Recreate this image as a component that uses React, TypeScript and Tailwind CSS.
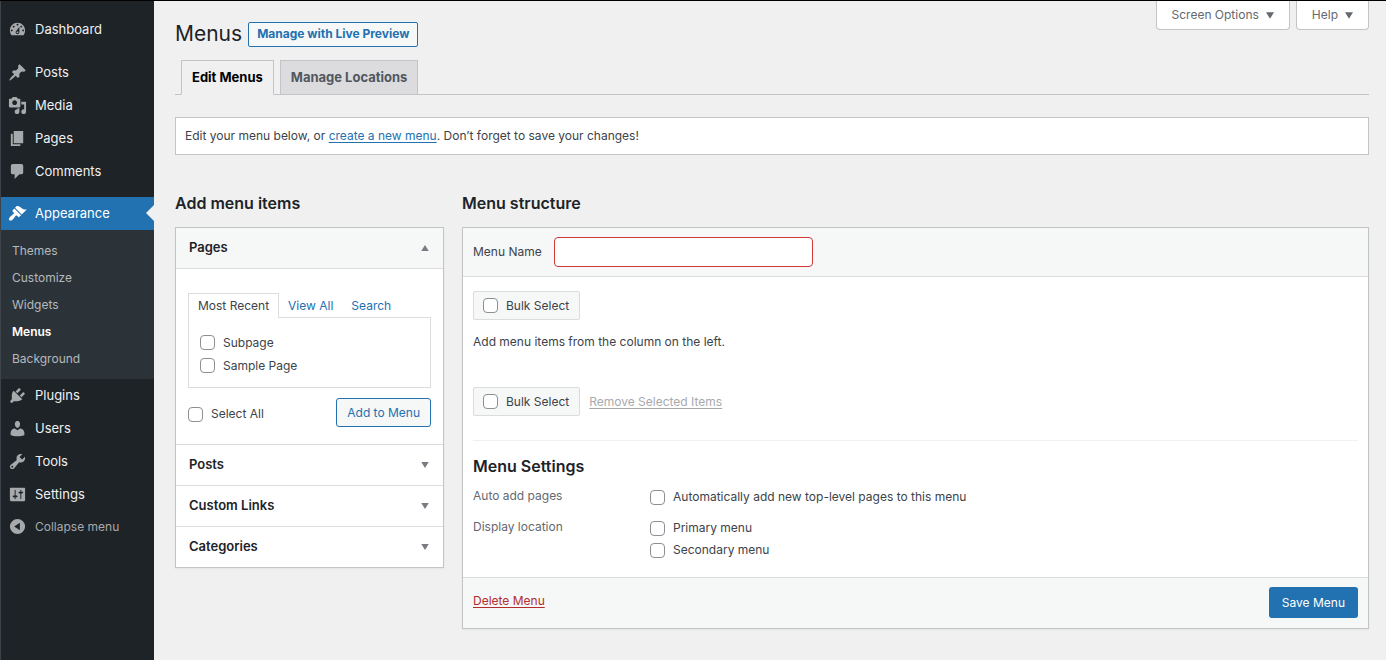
import React, { useState } from 'react';
import clsx from 'clsx';

const icons = {
  dashboard:
    'M3.76 16h12.48c1.1-1.37 1.76-3.11 1.76-5 0-4.42-3.58-8-8-8s-8 3.58-8 8c0 1.89.66 3.63 1.76 5zM10 4c.55 0 1 .45 1 1s-.45 1-1 1-1-.45-1-1 .45-1 1-1zM6 6c.55 0 1 .45 1 1s-.45 1-1 1-1-.45-1-1 .45-1 1-1zm8 0c.55 0 1 .45 1 1s-.45 1-1 1-1-.45-1-1 .45-1 1-1zm-5.37 5.55L12 7v6c0 1.1-.9 2-2 2s-2-.9-2-2c0-.57.24-1.08.63-1.45zM4 10c.55 0 1 .45 1 1s-.45 1-1 1-1-.45-1-1 .45-1 1-1zm12 0c.55 0 1 .45 1 1s-.45 1-1 1-1-.45-1-1 .45-1 1-1zm-5 3c0-.55-.45-1-1-1s-1 .45-1 1 .45 1 1 1 1-.45 1-1z',
  posts:
    'M10.44 3.02l1.82-1.82 6.36 6.35-1.83 1.82c-1.05-.68-2.48-.57-3.41.36l-.75.75c-.92.93-1.04 2.35-.35 3.41l-1.83 1.82-2.41-2.41-2.8 2.79c-.42.42-3.38 2.71-3.8 2.29s1.86-3.39 2.28-3.81l2.79-2.79L4.1 9.36l1.83-1.82c1.05.69 2.48.57 3.4-.36l.75-.75c.93-.92 1.05-2.35.36-3.41z',
  media:
    'M13 11V4c0-.55-.45-1-1-1h-1.67L9 1H5L3.67 3H2c-.55 0-1 .45-1 1v7c0 .55.45 1 1 1h10c.55 0 1-.45 1-1zM7 4.5c1.38 0 2.5 1.12 2.5 2.5S8.38 9.5 7 9.5 4.5 8.38 4.5 7 5.62 4.5 7 4.5zM14 6h5v10.5c0 1.38-1.12 2.5-2.5 2.5S14 17.88 14 16.5s1.12-2.5 2.5-2.5c.17 0 .34.02.5.05V9h-3V6zm-4 8.05V13h2v3.5c0 1.38-1.12 2.5-2.5 2.5S7 17.88 7 16.5 8.12 14 9.5 14c.17 0 .34.02.5.05z',
  pages: 'M6 15V2h10v13H6zm-1 1h8v2H3V5h2v11z',
  comments:
    'M5 2h9c1.1 0 2 .9 2 2v7c0 1.1-.9 2-2 2h-2l-5 5v-5H5c-1.1 0-2-.9-2-2V4c0-1.1.9-2 2-2z',
  appearance:
    'M14.48 11.06L7.41 3.99l1.5-1.5c.5-.56 2.3-.47 3.51.32 1.21.8 1.43 1.28 2.91 2.1 1.18.64 2.45 1.26 4.45.85zm-.71.71L6.7 4.7 4.93 6.47c-.39.39-.39 1.02 0 1.41l1.06 1.06c.39.39.39 1.03 0 1.42-.6.6-1.43 1.11-2.21 1.69-.35.26-.7.53-1.01.84C1.43 14.23.4 16.08 1.4 17.07c.99 1 2.84-.03 4.18-1.36.31-.31.58-.66.85-1.02.57-.78 1.08-1.61 1.69-2.21.39-.39 1.02-.39 1.41 0l1.06 1.06c.39.39 1.02.39 1.41 0z',
  plugins:
    'M13.11 4.36L9.87 7.6 8 5.73l3.24-3.24c.35-.34 1.05-.2 1.56.32.52.51.66 1.21.31 1.55zm-8 1.77l.91-1.12 9.01 9.01-1.19.84c-.71.71-2.63 1.16-3.82 1.16H6.14L4.9 17.26c-.59.59-1.54.59-2.12 0-.59-.58-.59-1.53 0-2.12l1.24-1.24v-3.88c0-1.13.4-3.19 1.09-3.89zm7.26 3.97l3.24-3.24c.34-.35 1.04-.21 1.55.31.52.51.66 1.21.31 1.55l-3.24 3.25z',
  users:
    'M10 9.25c-2.27 0-2.73-3.44-2.73-3.44C7 4.02 7.82 2 9.97 2c2.16 0 2.98 2.02 2.71 3.81 0 0-.41 3.44-2.68 3.44zm0 2.57L12.72 10c2.39 0 4.52 2.33 4.52 4.53v2.49s-3.65 1.13-7.24 1.13c-3.65 0-7.24-1.13-7.24-1.13v-2.49c0-2.25 1.94-4.48 4.47-4.48z',
  tools:
    'M16.68 9.77c-1.34 1.34-3.3 1.67-4.95.99l-5.41 6.52c-.99.99-2.59.99-3.58 0s-.99-2.59 0-3.57l6.52-5.42c-.68-1.65-.35-3.61.99-4.95 1.28-1.28 3.12-1.62 4.72-1.06l-2.89 2.89 2.82 2.82 2.86-2.87c.53 1.58.18 3.39-1.08 4.65zM3.81 16.21c.4.39 1.04.39 1.43 0 .4-.4.4-1.04 0-1.43-.39-.4-1.03-.4-1.43 0-.39.39-.39 1.03 0 1.43z',
  settings:
    'M18 16V4c0-.55-.45-1-1-1H3c-.55 0-1 .45-1 1v12c0 .55.45 1 1 1h14c.55 0 1-.45 1-1zM8 11h1c.55 0 1 .45 1 1s-.45 1-1 1H8v1.5c0 .28-.22.5-.5.5s-.5-.22-.5-.5V13H6c-.55 0-1-.45-1-1s.45-1 1-1h1V5.5c0-.28.22-.5.5-.5s.5.22.5.5V11zm5-2h-1c-.55 0-1-.45-1-1s.45-1 1-1h1V5.5c0-.28.22-.5.5-.5s.5.22.5.5V7h1c.55 0 1 .45 1 1s-.45 1-1 1h-1v5.5c0 .28-.22.5-.5.5s-.5-.22-.5-.5V9z',
  collapse: 'M10 2a8 8 0 1 0 0 16 8 8 0 0 0 0-16zM12.5 14L6.5 10l6-4v8z',
};

type IconName = keyof typeof icons;

function Icon({ name }: { name: IconName }) {
  return (
    <svg viewBox="0 0 20 20" className="w-[19px] h-[19px] shrink-0" fill="currentColor" fillRule="evenodd" aria-hidden="true">
      <path d={icons[name]} />
    </svg>
  );
}

function Triangle({ up = false, className }: { up?: boolean; className: string }) {
  return (
    <svg viewBox="0 0 10 8" className={className} fill="currentColor" aria-hidden="true">
      <path d={up ? 'M5 0l5 8H0z' : 'M0 0h10L5 8z'} />
    </svg>
  );
}

function NavItem({ icon, label, active = false }: { icon: IconName; label: string; active?: boolean }) {
  return (
    <a
      href="#"
      className={clsx(
        'relative flex items-center gap-2 h-[33px] pl-[7px] text-[13px]',
        active ? 'bg-[#2271b1] text-white' : 'text-[#f0f0f1]'
      )}
    >
      <span className={clsx('flex', !active && 'text-[#a7aaad]')}>
        <Icon name={icon} />
      </span>
      {label}
      {active && (
        <span className="absolute right-0 top-2 border-y-8 border-r-8 border-y-transparent border-r-[#f0f0f1]" />
      )}
    </a>
  );
}

const submenu = ['Themes', 'Customize', 'Widgets', 'Menus', 'Background'];

function Sidebar() {
  return (
    <nav className="w-[154px] shrink-0 bg-[#1d2327] border-l border-[#3c434a] pt-3" aria-label="Main menu">
      <NavItem icon="dashboard" label="Dashboard" />
      <div className="mt-[10px]">
        <NavItem icon="posts" label="Posts" />
        <NavItem icon="media" label="Media" />
        <NavItem icon="pages" label="Pages" />
        <NavItem icon="comments" label="Comments" />
      </div>
      <div className="mt-[9px]">
        <NavItem icon="appearance" label="Appearance" active />
        <ul className="bg-[#2c3338] py-[7px]">
          {submenu.map((item) => (
            <li key={item}>
              <a
                href="#"
                className={clsx(
                  'flex items-center h-[27px] pl-[11px]',
                  item === 'Menus' ? 'font-semibold text-white' : 'text-[#b4b9be]'
                )}
              >
                {item}
              </a>
            </li>
          ))}
        </ul>
      </div>
      <NavItem icon="plugins" label="Plugins" />
      <NavItem icon="users" label="Users" />
      <NavItem icon="tools" label="Tools" />
      <NavItem icon="settings" label="Settings" />
      <button type="button" className="flex items-center gap-2 h-[31px] pl-[7px] text-[#a7aaad]">
        <Icon name="collapse" />
        Collapse menu
      </button>
    </nav>
  );
}

function Checkbox({ label, className }: { label: string; className?: string }) {
  return (
    <label className={clsx('flex items-center gap-2', className)}>
      <input
        type="checkbox"
        className="appearance-none w-[15px] h-[15px] shrink-0 rounded border border-[#8c8f94] bg-white checked:bg-[#2271b1]"
      />
      {label}
    </label>
  );
}

function BulkSelect() {
  return (
    <Checkbox
      label="Bulk Select"
      className="h-[29px] pl-[9px] pr-[10px] rounded-xs border border-[#dcdcde] bg-[#f6f7f7]"
    />
  );
}

function AccordionHeader({ title, open = false }: { title: string; open?: boolean }) {
  return (
    <h3>
      <button
        type="button"
        aria-expanded={open}
        className={clsx(
          'flex items-center justify-between w-full h-10 pl-[13px] pr-[14px] text-[13px] font-semibold text-[#1d2327]',
          open && 'bg-[#f6f7f7]'
        )}
      >
        {title}
        <Triangle up={open} className="w-[8px] h-[6px] text-[#787c82]" />
      </button>
    </h3>
  );
}

function AddMenuItems() {
  return (
    <section className="w-[269px] shrink-0">
      <h2 className="text-base leading-6 font-semibold text-[#1d2327]">Add menu items</h2>
      <div className="mt-3 border border-[#c3c4c7] bg-white shadow-xs divide-y divide-[#dcdcde]">
        <AccordionHeader title="Pages" open />
        <div className="pt-6 px-3 pb-[17px]">
          <div className="flex h-[25px] -mb-px" role="tablist">
            <button type="button" role="tab" aria-selected="true" className="px-[9px] border border-b-0 border-[#dcdcde] bg-white">
              Most Recent
            </button>
            <button type="button" role="tab" aria-selected="false" className="px-[9px] text-[#2271b1]">
              View All
            </button>
            <button type="button" role="tab" aria-selected="false" className="px-[9px] text-[#2271b1]">
              Search
            </button>
          </div>
          <div className="h-[71px] border border-[#dcdcde] px-[11px] pt-[13px]">
            <Checkbox label="Subpage" className="h-[23px]" />
            <Checkbox label="Sample Page" className="h-[23px]" />
          </div>
          <div className="flex items-end justify-between mt-[10px]">
            <Checkbox label="Select All" className="h-[26px]" />
            <button
              type="button"
              className="h-[29px] px-[10px] rounded-[3px] border border-[#2271b1] bg-[#f6f7f7] text-[#2271b1]"
            >
              Add to Menu
            </button>
          </div>
        </div>
        <AccordionHeader title="Posts" />
        <AccordionHeader title="Custom Links" />
        <AccordionHeader title="Categories" />
      </div>
    </section>
  );
}

function MenuStructure() {
  const [name, setName] = useState('');

  return (
    <section className="flex-1 min-w-0">
      <h2 className="text-base leading-6 font-semibold text-[#1d2327]">Menu structure</h2>
      <div className="mt-3 border border-[#c3c4c7] bg-white shadow-xs">
        <div className="flex items-center gap-3 h-[49px] px-[10px] border-b border-[#dcdcde] bg-[#f6f7f7]">
          <label htmlFor="menu-name">Menu Name</label>
          <input
            id="menu-name"
            type="text"
            value={name}
            onChange={(e) => setName(e.target.value)}
            className="w-[259px] h-[30px] px-2 rounded border border-[#d63638] bg-white outline-none"
          />
        </div>

        <div className="px-[10px] pt-[14px] pb-4">
          <div className="flex">
            <BulkSelect />
          </div>
          <p className="mt-3 leading-5">Add menu items from the column on the left.</p>
          <div className="flex items-center gap-[9px] mt-[35px]">
            <BulkSelect />
            <button
              type="button"
              disabled
              className="text-[#a7aaad] underline underline-offset-2"
            >
              Remove Selected Items
            </button>
          </div>

          <hr className="mt-6 border-[#f0f0f1]" />
          <h3 className="mt-[13px] text-base leading-6 font-semibold text-[#1d2327]">Menu Settings</h3>
          <div className="grid grid-cols-[177px_1fr] gap-y-[9px] mt-2">
            <span className="text-[#646970] leading-5">Auto add pages</span>
            <Checkbox label="Automatically add new top-level pages to this menu" className="h-[22px]" />
            <span className="text-[#646970] leading-5">Display location</span>
            <div>
              <Checkbox label="Primary menu" className="h-[22px]" />
              <Checkbox label="Secondary menu" className="h-[22px]" />
            </div>
          </div>
        </div>

        <div className="flex items-start justify-between h-[51px] px-[10px] pt-[9px] border-t border-[#dcdcde] bg-[#f6f7f7]">
          <a href="#" className="leading-7 text-[#b32d2e] underline underline-offset-2">
            Delete Menu
          </a>
          <button type="button" className="h-[31px] px-[13px] rounded-[3px] bg-[#2271b1] text-white">
            Save Menu
          </button>
        </div>
      </div>
    </section>
  );
}

function MetaButton({ label }: { label: string }) {
  return (
    <button
      type="button"
      className="flex items-center gap-[7px] h-[29px] px-[15px] rounded-b border border-t-0 border-[#c3c4c7] bg-white text-[#646970]"
    >
      {label}
      <Triangle className="w-[8px] h-[7px]" />
    </button>
  );
}

export default function App() {
  return (
    <div className="flex min-h-screen border-t border-black bg-[#f0f0f1] font-['Inter','Liberation_Sans',sans-serif] text-xs text-[#3c434a]">
      <Sidebar />
      <main className="flex-1 min-w-0 pl-[21px] pr-[17px] pb-8">
        <div className="flex items-start justify-between">
          <div className="flex items-center gap-[6px] pt-[17px]">
            <h1 className="text-[21px] leading-8 text-[#1d2327]">Menus</h1>
            <a
              href="#"
              className="flex items-center h-[25px] px-2 rounded-xs border border-[#2271b1] bg-[#f6f7f7] font-bold text-[#2271b1]"
            >
              Manage with Live Preview
            </a>
          </div>
          <div className="flex gap-[6px]">
            <MetaButton label="Screen Options" />
            <MetaButton label="Help" />
          </div>
        </div>

        {/* Page tabs */}
        <nav className="flex gap-[6px] mt-[10px] pl-[6px] border-b border-[#c3c4c7] text-[13px] font-bold" aria-label="Secondary menu">
          <a
            href="#"
            aria-current="page"
            className="flex items-center h-[35px] -mb-px px-[10px] border border-[#c3c4c7] border-b-[#f0f0f1] bg-[#f0f0f1] text-black"
          >
            Edit Menus
          </a>
          <a href="#" className="flex items-center h-[34px] px-[10px] border border-b-0 border-[#c3c4c7] bg-[#dcdcde] text-[#50575e]">
            Manage Locations
          </a>
        </nav>

        <p className="mt-[22px] px-[9px] py-2 border border-[#c3c4c7] bg-white leading-5">
          Edit your menu below, or{' '}
          <a href="#" className="text-[#2271b1] underline underline-offset-2">
            create a new menu
          </a>
          . Don’t forget to save your changes!
        </p>

        <div className="flex items-start gap-[18px] mt-9">
          <AddMenuItems />
          <MenuStructure />
        </div>
      </main>
    </div>
  );
}
